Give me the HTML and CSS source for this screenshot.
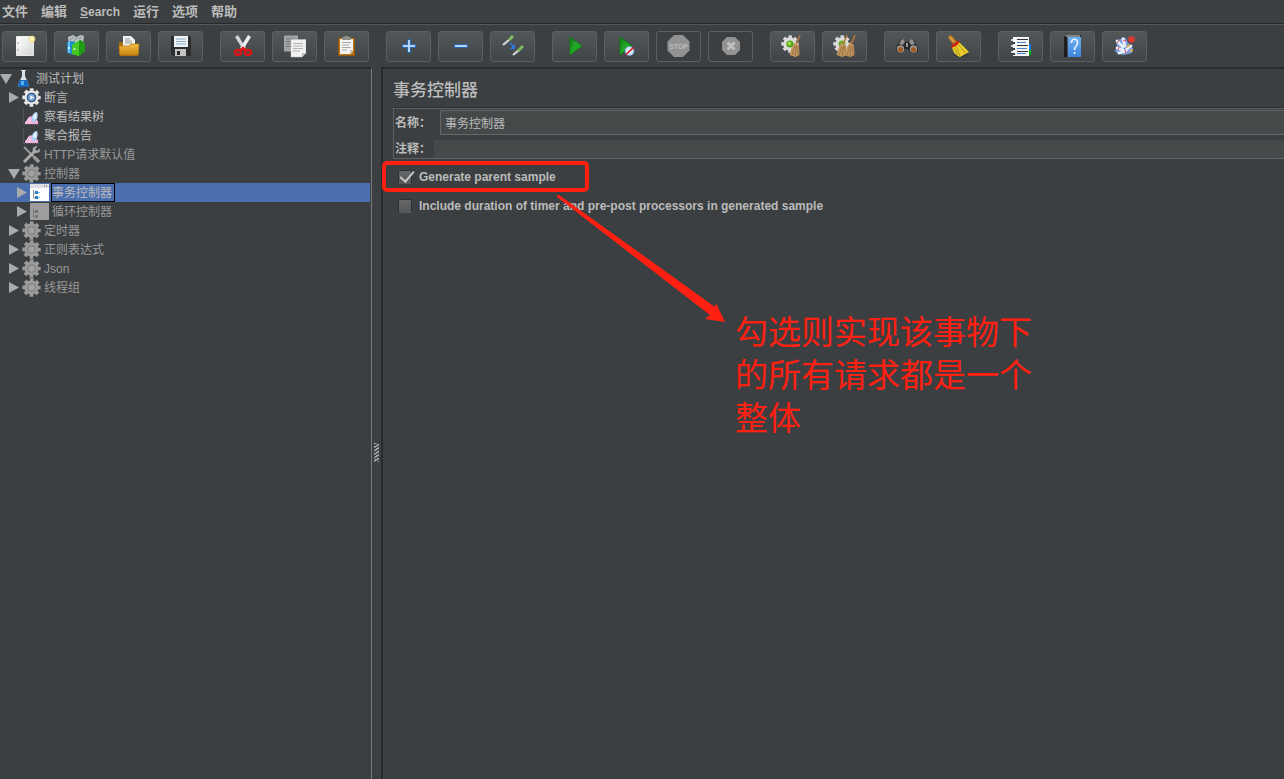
FILE: index.html
```html
<!DOCTYPE html>
<html lang="zh-CN">
<head>
<meta charset="utf-8">
<title>事务控制器</title>
<link rel="stylesheet" href="styles.css">
</head>
<body>
<svg class="defs" aria-hidden="true">
  <defs>
    <linearGradient id="green" x1="0" y1="0" x2="1" y2="1"><stop offset="0" stop-color="#0c7a14"/><stop offset=".45" stop-color="#25a52b"/><stop offset="1" stop-color="#0bbb12"/></linearGradient>
    <linearGradient id="gold" x1="0" y1="0" x2="0" y2="1"><stop offset="0" stop-color="#f0bd45"/><stop offset="1" stop-color="#c98610"/></linearGradient>
    <linearGradient id="paper" x1="0" y1="0" x2="1" y2="1"><stop offset="0" stop-color="#ffffff"/><stop offset="1" stop-color="#d4d4d4"/></linearGradient>
    <linearGradient id="book" x1="0" y1="0" x2="0" y2="1"><stop offset="0" stop-color="#6fb0f2"/><stop offset="1" stop-color="#3f85d8"/></linearGradient>
    <symbol id="gear" viewBox="0 0 19 19"><circle cx="9.500" cy="9.500" r="7.800" fill="none" stroke="currentColor" stroke-width="2.800" stroke-dasharray="3.600 2.526" stroke-dashoffset="1.800"/><circle cx="9.500" cy="9.500" r="7.200" fill="currentColor"/></symbol>
    <symbol id="gear-off" viewBox="0 0 19 19"><use href="#gear" color="#9b9b9b"/><circle cx="9.500" cy="9.500" r="4.500" fill="#858585"/><circle cx="9.500" cy="9.500" r="3" fill="#a2a2a2"/></symbol>
    <symbol id="gear-on" viewBox="0 0 19 19"><use href="#gear" color="#e6e6e6"/><circle cx="9.500" cy="9.500" r="4.800" fill="#2d5484"/><circle cx="9.500" cy="9.500" r="3.400" fill="#7ba5d4"/><path d="M8.500 7.500l3.500 2-3.500 2z" fill="#fff"/></symbol>
    <symbol id="chart" viewBox="0 0 19 19"><path d="M1.500 2v15.500H17" fill="none" stroke="#66696b" stroke-dasharray="1 1"/><path d="M3 17v-2c2-1 2-3 4-5 2-1 3-1 4 1l5 3v3z" fill="#f6b0de"/><path d="M4 16l3-5M7 16l2-4" stroke="#fbd8ef"/><path d="M9.500 12c0-4 3-7 5-7 2 1 1.500 7-1.500 10-2 1-3-1-3.500-3z" fill="#a9cff2"/><path d="M11 11c1-3 2-4 3.500-5l-.5 6z" fill="#f0f7fc"/></symbol>
    <symbol id="broom" viewBox="0 0 12 22"><path d="M11 0L7 10" stroke="#b5753c" stroke-width="1.600"/><path d="M5.500 8L10 10l.5 10-4 2-6-2c1-4 2-8 5-12z" fill="#c39660"/><path d="M6 11l-3 9M7.500 11l-1.500 10M9 11v9" stroke="#8d6535" stroke-width=".7" fill="none"/></symbol>
    <symbol id="arrow-right" viewBox="0 0 13 13"><path d="M1 1l10 5.500L1 12z" fill="#a9abad"/></symbol>
    <symbol id="arrow-down" viewBox="0 0 13 13"><path d="M0 2h12L6 12z" fill="#a9abad"/></symbol>
  </defs>
</svg>

<div class="app">
  <nav class="menubar" aria-label="菜单">
    <button type="button">文件</button>
    <button type="button">编辑</button>
    <button type="button" class="latin"><u>S</u>earch</button>
    <button type="button">运行</button>
    <button type="button">选项</button>
    <button type="button">帮助</button>
  </nav>

  <div class="toolbar" role="toolbar" aria-label="工具栏">
    <div class="group">
      <button type="button" aria-label="新建"><svg viewBox="0 0 23 23"><path d="M3.500 1.500h17v19h-17z" fill="url(#paper)" stroke="#fff" stroke-width=".8"/><path d="M5 7v2M5 14v2" stroke="#999"/><circle cx="19" cy="4" r="3.300" fill="#f2e47a" opacity=".85"/><circle cx="19" cy="4" r="1.700" fill="#fffbd0"/></svg></button>
      <button type="button" aria-label="模板"><svg viewBox="0 0 23 23"><path d="M3 2l5-2 3 2 5-2 3 1-1 7-14 3z" fill="#bcc3c6"/><path d="M5 5l4-3M9 6l4-4M14 4l3-2" stroke="#7c8488"/><path d="M2 7l5-1 3 1v13l-5-1-3-2z" fill="#1b8fd0"/><path d="M4 7v11" stroke="#7fd0f5" stroke-width="1.500"/><path d="M7 10l8-5 5 4v7l-6 5-7-2z" fill="#27ae18"/><path d="M7 10l7-4v15l-7-2z" fill="#46c727"/><path d="M14 6l2-1 4 4v7l-6 5z" fill="#1f9a14"/><circle cx="9.500" cy="14" r="1" fill="#d8ffd0"/><circle cx="4" cy="13" r="1" fill="#fff"/></svg></button>
      <button type="button" aria-label="打开"><svg viewBox="0 0 23 23"><path d="M2 7h6l1 2h12l1 2v8l-2 2H4l-2-2z" fill="#a46c0b"/><path d="M6 1h8l4 4v8H6z" fill="#f2f2f2"/><path d="M8 4h5M8 6h7M8 8h7" stroke="#999"/><path d="M2 11h10l2-2h8l-1 11H3z" fill="url(#gold)" stroke="#b87f16" stroke-width=".8"/></svg></button>
      <button type="button" aria-label="保存"><svg viewBox="0 0 23 23"><path d="M2 1h19l1 1v19H4l-2-2z" fill="#2d2e30"/><path d="M5 1h14v11H5z" fill="#edf3f7"/><path d="M7 4h10M7 6.500h10M7 9h10" stroke="#8badc9"/><path d="M6 14h11v7H6z" fill="#c4c4c4"/><path d="M8 16h3v4H8z" fill="#26282a"/></svg></button>
    </div>
    <div class="group">
      <button type="button" aria-label="剪切"><svg viewBox="0 0 23 23"><path d="M5.500 1l8 13" stroke="#d4d4d4" stroke-width="3.400"/><path d="M18.500 1l-8 13" stroke="#f1f1f1" stroke-width="3.400"/><g fill="none" stroke="#df1414" stroke-width="2.600"><ellipse cx="7" cy="17.500" rx="3" ry="2.500"/><ellipse cx="17" cy="17.500" rx="3" ry="2.500"/><path d="M9 16l3-3 3 3"/></g></svg></button>
      <button type="button" aria-label="复制"><svg viewBox="0 0 23 23"><path d="M1 .5h14v16H1z" fill="#a1a3a3"/><path d="M3 4h9M3 6.500h9M3 9h5M3 11.500h5" stroke="#777a7b"/><path d="M8 4.500h15V18l-4 4H8z" fill="#f1f1f1" stroke="#c5c5c5" stroke-width=".5"/><path d="M10 8.500h10M10 11h10M10 13.500h10M10 16h7" stroke="#b2b2b2"/><path d="M23 18h-4v4z" fill="#bdbdbd"/></svg></button>
      <button type="button" aria-label="粘贴"><svg viewBox="0 0 23 23"><path d="M3.500 3h16v17.500h-16z" fill="#bd7715" stroke="#8b5711"/><path d="M5 4h13v12l-3 3H5z" fill="#f2f2f2"/><path d="M7 3V2h2l1-1h3l1 1h2v3H7z" fill="#8d9088"/><path d="M7 7.500h9M7 10h7M7 12.500h9M7 15h5" stroke="#aaa"/><path d="M18 15h-3v4z" fill="#c4c4c4"/></svg></button>
    </div>
    <div class="group">
      <button type="button" aria-label="展开"><svg viewBox="0 0 23 23"><path d="M12 4v14M5 11h14" stroke="#2b66b0" stroke-width="4"/><path d="M12 5v12M6 11h12" stroke="#b4d2f3" stroke-width="2"/></svg></button>
      <button type="button" aria-label="折叠"><svg viewBox="0 0 23 23"><path d="M5 11h14" stroke="#2b66b0" stroke-width="4"/><path d="M6 11h12" stroke="#b4d2f3" stroke-width="2"/></svg></button>
      <button type="button" aria-label="切换"><svg viewBox="0 0 23 23"><path d="M2 10l6-5M12 20l6-5" stroke="#d7d9d9" stroke-width="2.200"/><path d="M8 5l4-4M17 16l5-5" stroke="#7dbd5d" stroke-width="3"/><path d="M9 8l4 4" stroke="#2a7de8" stroke-width="1.500"/><path d="M14 9v5H9z" fill="#2a7de8"/></svg></button>
    </div>
    <div class="group">
      <button type="button" aria-label="启动"><svg viewBox="0 0 23 23"><path d="M7 2l12 9-12 9z" fill="url(#green)" stroke="#077b0d" stroke-width=".8"/></svg></button>
      <button type="button" aria-label="不停顿启动"><svg viewBox="0 0 23 23"><path d="M5 2l12 9-12 9z" fill="url(#green)" stroke="#077b0d" stroke-width=".8"/><circle cx="14.500" cy="16" r="4.500" fill="#d9e7f7" stroke="#5b95d0" stroke-width=".8"/><path d="M11 19.500l7.500-7" stroke="#d81818" stroke-width="1.600"/></svg></button>
      <button type="button" aria-label="停止" disabled><svg viewBox="0 0 23 23"><path d="M7 0h9l6.500 6.500v9L16 22H7L.5 15.500v-9z" fill="#929292"/><text x="11.500" y="14" text-anchor="middle" class="stop-text">STOP</text></svg></button>
      <button type="button" aria-label="关闭" disabled><svg viewBox="0 0 23 23"><path d="M8 2h8l5 5v8l-5 5H8l-5-5V7z" fill="#929292"/><path d="M8.500 7.500l7 7M15.500 7.500l-7 7" stroke="#c0c0c0" stroke-width="2.800"/></svg></button>
    </div>
    <div class="group">
      <button type="button" aria-label="清除"><svg viewBox="0 0 23 23"><use href="#gear" x="0" y="0" width="18" height="18" color="#dcdcdc"/><circle cx="9" cy="9" r="3.600" fill="#55a514"/><circle cx="8.500" cy="8.500" r="1.700" fill="#a3e551"/><use href="#broom" x="8" y="0" width="12" height="22"/></svg></button>
      <button type="button" aria-label="清除全部"><svg viewBox="0 0 23 23"><use href="#gear" x="0" y="0" width="18" height="18" color="#dcdcdc"/><circle cx="9" cy="9" r="3.400" fill="#66ae24"/><use href="#broom" x="3" y="0" width="12" height="22"/><use href="#broom" x="11" y="0" width="12" height="22"/></svg></button>
    </div>
    <div class="group">
      <button type="button" aria-label="查找"><svg viewBox="0 0 23 23"><path d="M1 13L5 5l4-1 2 3h2l2-3 4 1 4 8v3l-3 2h-4l-3-4h-3l-3 4H4l-3-2z" fill="#252525"/><path d="M4 9l2-4 3-1 1 3-2 3M20 9l-2-4-3-1-1 3 2 3" fill="#8d8d8d"/><path d="M11 8h2v4h-2z" fill="#999"/><circle cx="5.500" cy="14" r="3.700" fill="#9b9b9b"/><circle cx="18.500" cy="14" r="3.700" fill="#9b9b9b"/><circle cx="5.500" cy="14.500" r="2.600" fill="#a65a22"/><circle cx="18.500" cy="14.500" r="2.600" fill="#a65a22"/></svg></button>
      <button type="button" aria-label="重置查找"><svg viewBox="0 0 23 23"><ellipse cx="14" cy="20" rx="8" ry="2" fill="#303334" opacity=".5"/><path d="M3.500 2.500l5 6" stroke="#b67621" stroke-width="4.400" stroke-linecap="round"/><path d="M3 2l4 5" stroke="#dfa750" stroke-width="1.500"/><path d="M12 7l10 10-9 5c-5-2-7-5-8-10z" fill="#e8ce2c"/><path d="M9 11l4 10M12 10l6 8M7 13l4 7" stroke="#aa8b10" stroke-width=".8"/><path d="M4.500 11.500c3-1 6-3 7-5.500" fill="none" stroke="#d71c13" stroke-width="2.600"/></svg></button>
    </div>
    <div class="group">
      <button type="button" aria-label="函数助手"><svg viewBox="0 0 23 23"><path d="M19 9h3v6h-3z" fill="#1478e5"/><path d="M19 15h3v5h-3z" fill="#08a613"/><path d="M4 2h16v19H4z" fill="#f5f5f5"/><path d="M8 4.500h11M8 10.500h11M8 16.500h11" stroke="#333"/><path d="M8 7.500h9M8 13.500h10M8 18.500h9" stroke="#4a82ce"/><path d="M4 7h2v2H4zM4 13h2v2H4zM4 18h2v2H4z" fill="#333"/><path d="M2 5h4M2 11h4M2 17h4" stroke="#fff" stroke-width="1.500"/></svg></button>
      <button type="button" aria-label="帮助"><svg viewBox="0 0 23 23"><path d="M3 2l3-2h14v2H6v20H3z" fill="#1d1e20"/><path d="M5 1h14" stroke="#e7e7e7"/><path d="M7 2h13v20H7z" fill="url(#book)"/><path d="M10.500 8c0-5 6-5 6 0 0 3-3 3-3 7M13.500 17v2" fill="none" stroke="#e2f1ff" stroke-width="1.700"/></svg></button>
      <button type="button" aria-label="反馈"><svg viewBox="0 0 23 23"><path d="M3 5l5-1 1-2 4 1 2 5 3 2 2 4-1 4-8 2-6-1-3-3 2-4z" fill="#7d9ede"/><path d="M4 6l6 6M10 4l2 7M4 13l6 2M6 18l7-2M14 14l4-3" fill="none" stroke="#eaf1ff" stroke-width="2.800" stroke-linecap="round"/><path d="M6 5l-2 3M10 6l3-1M6 12l-1 3M12 15l1 3" stroke="#e54a4a"/><path d="M14 12l3-2M17 16l3-1" stroke="#edaa31" stroke-width="1.600"/><circle cx="18.500" cy="4.500" r="3.300" fill="#d83b30"/></svg></button>
    </div>
  </div>

  <div class="workspace">
    <aside class="tree-pane">
      <ul class="tree" role="tree" aria-label="测试计划">
        <li class="row" role="treeitem"><svg class="toggle"><use href="#arrow-down"/></svg><svg class="node" viewBox="0 0 19 19"><path d="M7 1h5v1h-1v5l4 9-1 2H5l-1-2 4-9V2H7z" fill="#d9e4ec"/><path d="M6 11h7l2 5-1 2H5l-1-2z" fill="#1769bd"/><path d="M7 12h3v4H7z" fill="#56b2f1"/></svg><span>测试计划</span></li>
        <li class="row level-1" role="treeitem"><svg class="toggle"><use href="#arrow-right"/></svg><svg class="node"><use href="#gear-on"/></svg><span>断言</span></li>
        <li class="row level-1" role="treeitem"><i class="toggle"></i><svg class="node"><use href="#chart"/></svg><span>察看结果树</span></li>
        <li class="row level-1" role="treeitem"><i class="toggle"></i><svg class="node"><use href="#chart"/></svg><span>聚合报告</span></li>
        <li class="row level-1 off" role="treeitem"><i class="toggle"></i><svg class="node" viewBox="0 0 19 19"><path d="M2 2l12 12" stroke="#999" stroke-width="2"/><path d="M12 12l5 5" stroke="#999" stroke-width="3.500"/><path d="M2 17L13 6" stroke="#aaa" stroke-width="3"/><path d="M17.500 3.500L15 6l-2-2 2.500-2.500c-3-1-6 2-4.500 5 1 2 6 2 7-.5z" fill="#aaa"/></svg><span>HTTP请求默认值</span></li>
        <li class="row level-1 off" role="treeitem"><svg class="toggle"><use href="#arrow-down"/></svg><svg class="node"><use href="#gear-off"/></svg><span>控制器</span></li>
        <li class="row level-2 selected" role="treeitem" aria-selected="true"><svg class="toggle"><use href="#arrow-right"/></svg><svg class="node" viewBox="0 0 19 19"><path d="M0 1h19v17H0z" fill="#fff"/><path d="M0 1h19v4H0z" fill="#dce0e3"/><path d="M14 3h1M16 3h1" stroke="#667"/><path d="M3.500 7v8H7M4 10h3" fill="none" stroke="#999"/><path d="M5 8h3v3H5zM5 13h3v3H5z" fill="#2d7fca"/><path d="M8 9h2v1H8zM8 14h2v1H8z" fill="#7fb0de"/></svg><span>事务控制器</span></li>
        <li class="row level-2 off" role="treeitem"><svg class="toggle"><use href="#arrow-right"/></svg><svg class="node" viewBox="0 0 19 19"><path d="M0 1h19v17H0z" fill="#9d9d9d"/><path d="M3.500 7v8H7M4 10h3" fill="none" stroke="#777"/><path d="M5 8h3v3H5zM5 13h3v3H5z" fill="#747474"/></svg><span>循环控制器</span></li>
        <li class="row level-1 off" role="treeitem"><svg class="toggle"><use href="#arrow-right"/></svg><svg class="node"><use href="#gear-off"/></svg><span>定时器</span></li>
        <li class="row level-1 off" role="treeitem"><svg class="toggle"><use href="#arrow-right"/></svg><svg class="node"><use href="#gear-off"/></svg><span>正则表达式</span></li>
        <li class="row level-1 off" role="treeitem"><svg class="toggle"><use href="#arrow-right"/></svg><svg class="node"><use href="#gear-off"/></svg><span>Json</span></li>
        <li class="row level-1 off" role="treeitem"><svg class="toggle"><use href="#arrow-right"/></svg><svg class="node"><use href="#gear-off"/></svg><span>线程组</span></li>
      </ul>
    </aside>
    <div class="splitter" role="separator"><i class="grip"></i></div>
    <main class="editor">
      <h1>事务控制器</h1>
      <div class="fields">
        <div class="field"><label for="name">名称：</label><input id="name" type="text" value="事务控制器"></div>
        <div class="field comment"><label for="comment">注释：</label><input id="comment" type="text"></div>
      </div>
      <div class="options">
        <label><input type="checkbox" checked>Generate parent sample</label>
        <label><input type="checkbox">Include duration of timer and pre-post processors in generated sample</label>
      </div>
      <div class="highlight"></div>
      <svg class="pointer" viewBox="0 0 169 129"><path d="M0 0h2L158 112l1-4 9 19-20-3 5-4L0 2z" fill="#ff2012"/></svg>
      <p class="note">勾选则实现该事物下的所有请求都是一个整体</p>
    </main>
  </div>
</div>
</body>
</html>
```

FILE: styles.css
```css
* {
  box-sizing: border-box;
}

body {
  margin: 0;
  background: #3c3f41;
  color: #bbbbbb;
  font: 12px/18px "Liberation Sans", "Noto Sans CJK SC", sans-serif;
}

button,
input {
  font: inherit;
  color: inherit;
}

.defs {
  position: absolute;
  width: 0;
  height: 0;
}

.app {
  display: flex;
  flex-direction: column;
  height: 100vh;
  overflow: hidden;
}

.menubar {
  display: flex;
  align-items: center;
  gap: 13px;
  height: 25px;
  padding: 0 2px 1px;
  border-bottom: 1px solid #585654;
  box-shadow: inset 0 -1px #262829;
}

.menubar button {
  padding: 0;
  border: 0;
  background: none;
  font-size: 13px;
  font-weight: bold;
}

.menubar .latin {
  font-size: 12px;
}

.toolbar {
  display: flex;
  gap: 17px;
  padding: 6px 2px 5px;
}

.group {
  display: flex;
  gap: 7px;
}

.group button {
  display: flex;
  align-items: center;
  justify-content: center;
  width: 45px;
  height: 31px;
  padding: 0;
  border: 1px solid #5b5f61;
  border-radius: 3px;
  background: linear-gradient(#52575a, #414547);
}

.group button:disabled {
  background: none;
}

.group svg {
  width: 23px;
  height: 23px;
}

.stop-text {
  fill: #bcbcbc;
  font: bold 7px "Liberation Sans", sans-serif;
}

.workspace {
  display: flex;
  flex: 1;
  min-height: 0;
}

.tree-pane {
  flex: 0 0 372px;
  border-top: 2px solid #282b2d;
  border-right: 1px solid #777979;
  padding-right: 1px;
}

.tree {
  margin: 0;
  padding: 0;
  list-style: none;
}

.row {
  display: flex;
  align-items: center;
  height: 19px;
}

.level-1 {
  padding-left: 8px;
}

.level-2 {
  padding-left: 16px;
}

.toggle {
  width: 13px;
  height: 13px;
}

.node {
  width: 19px;
  height: 19px;
  margin-left: 1px;
}

.row span {
  margin-left: 2px;
  padding: 0 1px;
}

.off {
  color: #999999;
}

.selected {
  background: #4b6eaf;
}

.selected span {
  padding: 1px 2px 0 0;
  border: 1px solid #000000;
  line-height: 16px;
}

.splitter {
  display: flex;
  flex: 0 0 9px;
  align-items: center;
  justify-content: center;
  padding-top: 58px;
}

.grip {
  width: 5px;
  height: 19px;
  background: repeating-linear-gradient(150deg, #a5a5a5 0 1px, #414446 2px 3px);
}

.editor {
  position: relative;
  flex: 1;
  min-width: 0;
  border-top: 2px solid #282b2d;
  border-left: 2px solid #282b2d;
  padding: 9px 0 0 10px;
}

h1 {
  margin: 0;
  font-size: 17px;
  font-weight: 500;
  line-height: 26px;
}

.fields {
  display: flex;
  flex-direction: column;
  gap: 5px;
  margin-top: 3px;
  padding-top: 2px;
  border-top: 1px solid #2b2d2e;
  border-left: 1px solid #5f6162;
  border-bottom: 1px solid #5f6162;
  box-shadow: inset 0 1px #5f6162;
}

.field {
  display: flex;
  align-items: center;
  gap: 9px;
  padding-left: 1px;
}

.field label {
  font-weight: bold;
}

.field input {
  flex: 1;
  min-width: 0;
  height: 25px;
  padding: 0 4px 1px;
  border: 1px solid #646668;
  border-right: 0;
  background: #45494a;
}

.comment {
  gap: 3px;
}

.comment input {
  height: 18px;
  border: 0;
}

.options {
  display: flex;
  flex-direction: column;
  align-items: flex-start;
  gap: 11px;
  padding: 9px 5px;
}

.options label {
  display: flex;
  align-items: center;
  gap: 7px;
  font-weight: bold;
}

.options input {
  appearance: none;
  display: grid;
  width: 14px;
  height: 14px;
  margin: 0;
  border: 1px solid #2f3132;
  border-bottom-color: #57595a;
  background: linear-gradient(#656768, #535556);
}

.options input:checked::after {
  content: "";
  width: 6px;
  height: 12px;
  margin: -3px 0 0 4px;
  border: solid #c6c6c6;
  border-width: 0 2px 2px 0;
  transform: rotate(40deg);
}

.highlight {
  position: absolute;
  top: 92px;
  left: -1px;
  width: 207px;
  height: 31px;
  border: 4px solid #ff2012;
  border-radius: 5px;
}

.pointer {
  position: absolute;
  top: 126px;
  left: 174px;
  width: 169px;
  height: 129px;
}

.note {
  position: absolute;
  top: 242px;
  left: 352px;
  width: 300px;
  margin: 0;
  color: #ff2012;
  font-size: 33px;
  line-height: 43px;
}
```
